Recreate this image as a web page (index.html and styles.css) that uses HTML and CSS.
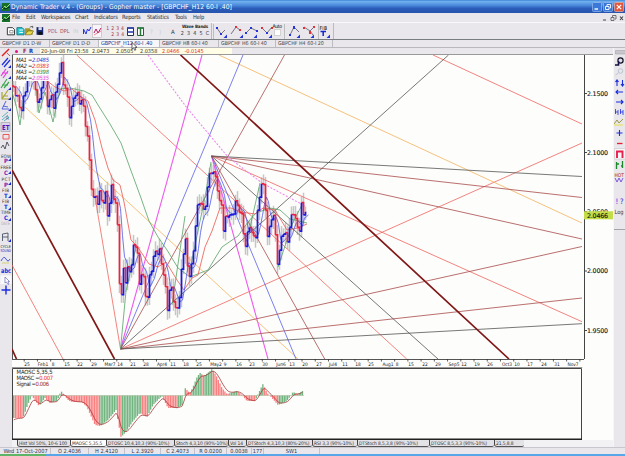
FILE: index.html
```html
<!DOCTYPE html>
<html lang="en">
<head>
<meta charset="utf-8">
<title>Dynamic Trader</title>
<link rel="stylesheet" href="styles.css">
</head>
<body>
<div class="app">
  <header class="titlebar">
    <svg class="logo" viewBox="0 0 8 8"><rect width="8" height="8" fill="#16702c"/><path d="M0 6L3 3L4 5L8 1" stroke="#9be070" fill="none"/><path d="M0 4L3 6L8 4" stroke="#032" fill="none"/></svg>
    <span class="title">Dynamic Trader v.4 - (Groups) - Gopher master - [GBPCHF_H12 60-I .40]</span>
    <svg class="winbtns" viewBox="0 0 32 10">
      <rect x=".5" y=".5" width="9" height="9" rx="1" fill="#3b78d8" stroke="#a8c8f4" stroke-width=".6"/><path d="M2.5 7H6" stroke="#fff" stroke-width="1.4"/>
      <rect x="11.5" y=".5" width="9" height="9" rx="1" fill="#3b78d8" stroke="#a8c8f4" stroke-width=".6"/><path d="M15 4V2.5H18.5V6H17.5M13.5 4.5H17V7.5H13.5Z" stroke="#fff" stroke-width=".9" fill="none"/>
      <rect x="22.5" y=".5" width="9" height="9" rx="1" fill="#e2573c" stroke="#f6c0b0" stroke-width=".6"/><path d="M24.8 2.8L29.2 7.2M29.2 2.8L24.8 7.2" stroke="#fff" stroke-width="1.2"/>
    </svg>
  </header>
  <nav class="menubar">
    <svg class="logo" viewBox="0 0 8 8"><rect width="8" height="8" fill="#16702c"/><path d="M0 6L3 3L4 5L8 1" stroke="#9be070" fill="none"/><path d="M0 4L3 6L8 4" stroke="#032" fill="none"/></svg>
    <span>File</span><span>Edit</span><span>Workspaces</span><span>Chart</span><span>Indicators</span><span>Reports</span><span>Statistics</span><span>Tools</span><span>Help</span>
    <svg class="mdi" viewBox="0 0 24 8"><path d="M2 6H5" stroke="#444"/><path d="M11.5 3V1.5H15V5H14M10 3.5H13V6.5H10Z" fill="none" stroke="#555" stroke-width=".8"/><path d="M19 2.5L22 6M22 2.5L19 6" stroke="#444" stroke-width="1.1"/></svg>
  </nav>
  <div class="toolbar">
    <div class="tb main">
      <svg class="files" viewBox="0 0 46 16">
        <path d="M3.5 4.5H9L11 6.5V12H3.5Z" fill="#fff" stroke="#333"/><path d="M6 7.5H9.5V10H6Z" fill="none" stroke="#555" stroke-width=".6"/>
        <path d="M13.5 4.5H19L21 6.5V12H13.5Z" fill="#27c7cf" stroke="#167a88"/><path d="M16 7H20M16 9.5H20" stroke="#fff"/>
        <path d="M22 5H27L28 7H30V12H22Z" fill="#a69a25"/><path d="M22 12L25 8H31L28 12Z" fill="#e9d94c" stroke="#554b10" stroke-width=".5"/><path d="M27 4L30 3L30 5" stroke="#222" stroke-width=".7" fill="none"/>
        <path d="M34 4H41V12H34Z" fill="#142570"/><path d="M36 4H39.5V7H36Z" fill="#d8dbe8"/><path d="M36 9H40V12H36Z" fill="#111"/>
      </svg>
      <span class="pdl">PDL</span><span class="dpl">DPL</span><span class="dim">IN</span>
      <svg class="waves" viewBox="0 0 20 16"><path d="M1.500 11V6L4 11L5.500 6L7 8L9 4" stroke="#2434dd" fill="none"/><rect x="10.500" y="1.500" width="9" height="13" fill="#f8f4fa" stroke="#aaa" stroke-width=".5"/><path d="M12 10L14 6L16 10L19 5" stroke="#b01c60" fill="none"/><path d="M12 12L19 8" stroke="#c45" fill="none" stroke-width=".6"/></svg>
      <div class="digits"><span>1 2 3 4</span><span>2 3 4</span></div>
      <svg class="panes" viewBox="0 0 20 16"><path d="M2.500 5H8.500V12.500H2.500Z" fill="#fff" stroke="#234"/><path d="M2 5H9M2 9H9" stroke="#2538b0" stroke-width="1.500"/><path d="M12.500 5H18.500V12.500H12.500Z" fill="#fff" stroke="#286038"/><path d="M12 5H19M15.500 5V12.500" stroke="#257a3c" stroke-width="1.500"/></svg>
      <span class="ghost">?</span><span class="ghost">)</span><span class="band-a">A</span>
      <div class="bands"><b>Wave Bands</b><span>2 3 4 5 C</span></div>
    </div>
    <div class="tb swings">
      <svg viewBox="0 0 122 16">
        <g fill="none" stroke="#556" stroke-width=".8">
          <path d="M5 5L9 11L13 7M19 11L24 4L28 7M34 10L39 5L45 8M50 5L55 10L60 4M78 12L82 4L87 9M92 4L98 8L101 12M98 8L102 4"/>
        </g>
        <path d="M62.500 6.500H68.500V12.500H62.500Z" fill="#fff" stroke="#bbb" stroke-width=".6"/>
        <g fill="#2434dd"><path d="M4 4h2v2H4zM8 10h2v2H8zM33 9h2v2h-2zM38 4h2v2h-2zM44 7h2v2h-2zM54 9h2v2h-2zM77 11h2v2h-2zM81 3h2v3h-2z"/>
        <path d="M15 11.500V15H11.500ZM31 11.500V15H27.500ZM45 11.500V15H41.500ZM60 11.500V15H56.500ZM88 11.500V15H84.500ZM102 11.500V15H98.500ZM118 11.500V15H114.500Z"/></g>
        <path d="M23 3h2v2h-2zM27 6h2v2h-2zM49 4h2v2h-2zM59 4h2v2h-2zM91 4h2v2h-2zM97 8h2v3h-2zM101 3h2v2h-2z" fill="#e0303c"/>
        <path d="M72.500 1V16M106.500 1V16M1.500 1V16" stroke="#aaa" stroke-width=".7"/>
        <text x="60.500" y="4.600" font-size="5" textLength="9.500">Auto</text>
        <text x="107.500" y="6.500" font-size="5" textLength="7.500">FIB</text>
        <path d="M108.500 8.500H114M111.200 8.500V13" stroke="#1525d0" stroke-width="1.500"/>
      </svg>
    </div>
  </div>
  <div class="tabs">
    <span>GBPCHF D1 D-W</span><span>GBPCHF D1 D-D</span><span class="on">GBPCHF_H12 60-I .40</span><span>GBPCHF H8 60-I 40</span><span>GBPCHF H6 60-I 40</span><span>GBPCHF H4 60-I 20</span>
    <svg class="cursor" viewBox="0 0 7 9"><path d="M1 .5V7L2.600 5.700L3.700 8.300L4.800 7.800L3.800 5.300H6Z" fill="#fff" stroke="#222" stroke-width=".7"/></svg>
  </div>
  <div class="work">
    <aside class="left">
      <svg viewBox="0 0 12 248">
        <g fill="none" stroke-width="1.200">
          <path d="M2 8L9 1" stroke="#e32020" stroke-width="1.500"/><path d="M7 5L10 8" stroke="#b33" stroke-width=".8"/>
          <path d="M2 17L8 10M4 19L10 12" stroke="#1a2de0"/>
          <path d="M1 28L6 21M3 30L8 23M2 25H8" stroke="#e43be0"/>
          <path d="M1 40L7 31M4 40L9 34M2 37H8" stroke="#37a84a"/>
          <path d="M2 44V51H10M2 51L8 42M3 48H8" stroke="#a8a830"/>
          <path d="M2 61L6 53M2 61H9M3 58L8 59" stroke="#4558dd" stroke-width=".9"/>
          <path d="M2 69L8 64M2 72L8 67M4 73L9 69" stroke="#53a9b5" stroke-width=".9"/>
          <path d="M1 74.500H10V83.500H1Z" stroke="#999" stroke-width=".6" fill="#dcd4ec"/>
          <path d="M3 86.500H9V91H3Z" stroke="#ea4b4b" stroke-width=".9"/>
          <path d="M1 100L3 97L5 101L7 94L9 98" stroke="#334" stroke-width=".8"/>
          <path d="M2.500 193V186L8 185V193M3 189H8" stroke="#345" stroke-width=".8"/>
          <path d="M1 213Q4 207 6 211T10 211" stroke="#3348d4" stroke-width=".9"/><path d="M2 215H9" stroke="#cc5" stroke-width=".8"/>
        </g>
        <path d="M0.500 227.500H11.500V236H0.500Z" fill="#f9f8fb"/>
        <path d="M5 229V235L6.500 234L8 236.500L9 236L8 233.500H9.500Z" fill="#fff" stroke="#55a" stroke-width=".6"/>
        <path d="M1.500 242H10.500M6 237.500V246.500" stroke="#1a2de0" stroke-width="1.400"/>
        <path d="M11 17V20H8ZM11 28V31H8ZM11 39V42H8ZM11 49V52H8ZM11 60V63H8ZM11 110V113H8ZM11 123V126H8ZM11 134V137H8ZM11 147V150H8ZM11 159V162H8ZM11 170V173H8ZM11 191V194H8Z" fill="#1525d0"/>
        <text x="2" y="82" font-size="7" font-weight="bold" fill="#4a18b0" textLength="7.500" lengthAdjust="spacingAndGlyphs">ET</text>
        <text x="6" y="72" font-size="5" fill="#379">R</text>
        <g font-size="4.600" fill="#333">
          <text x="1" y="109.500" textLength="10" lengthAdjust="spacingAndGlyphs">EOW</text><text x="0.500" y="121" textLength="11" lengthAdjust="spacingAndGlyphs">FREE</text><text x="1.500" y="133" textLength="9">PCT</text><text x="2" y="144" textLength="7">FIB</text><text x="2" y="155" textLength="7">FIB</text><text x="1" y="166.300" textLength="10" lengthAdjust="spacingAndGlyphs">TIME</text><text x="1" y="177" textLength="9" lengthAdjust="spacingAndGlyphs" fill="#aab">DATE</text>
        </g>
        <g font-size="3.900"><text x="0.500" y="199.500" textLength="10.500" lengthAdjust="spacingAndGlyphs" fill="#333">CYCLE</text><text x="0.500" y="204.300" textLength="10.500" lengthAdjust="spacingAndGlyphs" fill="#22b">SOUND</text></g>
        <g font-size="6" font-weight="bold" fill="#7a1cb0"><text x="4" y="115">P</text><text x="4" y="127">C</text><text x="4" y="138.500">P</text><g fill="#1a2de0"><text x="4" y="149.500">T</text><text x="4" y="161">T</text><text x="4" y="172">C</text></g></g>
        <text x="1" y="225" font-size="6.500" font-weight="bold" fill="#1a2de0" textLength="10" lengthAdjust="spacingAndGlyphs">abc</text>
      </svg>
    </aside>
    <main class="center">
      <div class="info"><i class="dot"></i><b class="f">F</b><b class="r">R</b>
        <div class="quote"><span>20-Jun-08 Fri 23:58</span><span>2.0473</span><span>2.0505</span><span>2.0358</span><span class="neg">2.0466</span><span class="neg">-0.0145</span></div>
      </div>
      <div class="pricerow">
        <svg class="chart" id="chart" viewBox="12 55 572 304">
          <path d="M12.500 55V359" stroke="#555" fill="none"/>
          <g id="haze" stroke="#c6c6c6" stroke-width="1.500"></g>
          <g fill="none" stroke-width=".8">
            <path stroke="#f0655f" d="M76.700 55L406.700 359M12 265L63 359M433 55L582 124M95 197L120.500 349M120.500 349L582 143M211.500 156L582 321.700"/>
            <path stroke="#f4b35e" d="M219 55L582 223M25 107L298 359"/>
            <path stroke="#ee5cee" stroke-width="1.100" d="M120.500 349L202 55M211.500 156L268 359"/>
            <path stroke="#5960ea" d="M120.500 349L243 55M211.500 156L296 359"/>
            <path stroke="#a84b4b" d="M120.500 349L284.500 55M120.500 349L582 246.500M120.500 349L582 298M211.500 156L582 197.500M211.500 156L582 239M211.500 156L324.700 359"/>
            <path stroke="#555" d="M120.500 349L448.500 55M120.500 349L582 323.700M211.500 156L582 176.500M211.500 156L438 359"/>
            <path stroke="#ed8aee" stroke-dasharray="2 1.500" stroke-width="1.100" d="M148 55L187 108L228 157L262 183L305 206"/>
            <path stroke="#801818" stroke-width="1.700" d="M180.500 55L509 359M12 170L114.500 359M12 349L16.500 359"/>
            <path stroke="#55a266" d="M12 92L16 105L20 125L24 95M36 88L39 113L45 92L53 122L60 89L70 88L84 91L92 95L98 105L110 124L121 143L130 168L141 198L149 221L158 237L167 250L178 268L190 277L208 270L217 255L222 247L238 236L248 222L256 213L270 208L280 210L290 219L307 223"/>
            <path stroke="#55a266" d="M120.500 349L126 291L136 247M172 305L185 216M190 270L205 197L211 162M249 232L260 183M278 267L293 222L302 205"/>
            <path stroke="#ec5550" d="M46 80L55 87L64 91L72 89L80 96L88 101L95 120L102 148L108 168L113 180L120 185L124 202L131 240L137 246L149 264L158 267L166 262L177 280L184 290L192 278L198 275L205 247L212 231L220 208L231 208L241 212L255 214L263 208L275 210L287 230L298 228L307 224"/>
          </g>
          <path id="fast" fill="none" stroke="#4a55e4" stroke-width=".8"/>
          <path id="down" fill="none" stroke="#f4203c" stroke-width="1.700"/>
          <path id="up" fill="none" stroke="#1919e0" stroke-width="1.700"/>
          <rect x="13" y="56" width="37" height="25" fill="#fdfdfb"/>
          <g font-size="5.800" font-style="italic" fill="#222">
            <text x="16" y="61.500" textLength="33">MA1 =<tspan fill="#2233d8">2.0485</tspan></text>
            <text x="16" y="67.800" textLength="33">MA2 =<tspan fill="#e22">2.0383</tspan></text>
            <text x="16" y="74" textLength="33">MA3 =<tspan fill="#2a8a3e">2.0398</tspan></text>
            <text x="16" y="80.200" textLength="33">MA4 =<tspan fill="#e53be5">2.0535</tspan></text>
          </g>
        </svg>
        <svg class="scale" viewBox="584 55 29 304">
          <path d="M584.500 55V359M584 93.500H587M584 152.500H587M584 211.500H587M584 271H587M584 330.500H587" stroke="#444" fill="none"/>
          <g class="ticks" fill="#111"><text x="587" y="95.700" textLength="21">2.1500</text><text x="587" y="155" textLength="21">2.1000</text><text x="587" y="213.500" textLength="21">2.0500</text><text x="587" y="273.300" textLength="21">2.0000</text><text x="587" y="332.800" textLength="21">1.9500</text></g>
          <rect x="584" y="211.300" width="29" height="8" fill="#c3dc48"/><g class="ticks"><text x="587" y="217.900" fill="#111" textLength="21">2.0466</text></g>
        </svg>
      </div>
      <svg class="dates" id="dates" viewBox="12 359 601 9"><path d="M12 359.500H584" stroke="#555"/><path d="M12 367.500H582V368" stroke="#999" fill="none"/></svg>
      <svg class="osc" id="osc" viewBox="12 368 601 72">
        <path d="M12.500 440V368.500H581.500V440" fill="none" stroke="#444"/>
        <g id="bars" stroke-width="1.350"></g>
        <path d="M13 395.500H304" stroke="#9a8" stroke-width=".4"/>
        <path id="signal" fill="none" stroke="#a83a3a" stroke-width=".8"/>
        <rect x="14" y="370" width="40" height="17" fill="#fdfdfb"/>
        <g font-size="5.800" fill="#222"><text x="16.500" y="373.800" textLength="36">MAOSC 5,35,5</text><text x="16.500" y="380" textLength="36.500">MAOSC =<tspan fill="#e22">0.007</tspan></text><text x="16.500" y="386.200" textLength="32.500">Signal =<tspan fill="#922">0.006</tspan></text></g>
        <path d="M12 439.300H582" stroke="#222" stroke-width="1.400"/>
      </svg>
      <div class="subtabs"><span>Hist Vol 50%, 10-6 100</span><span class="on">MAOSC 5,35,5</span><span>DTOSC 10,4,10,3 (90%-10%)</span><span>Stoch 4,3,10 (90%-10%)</span><span>Vol 14</span><span>DTStoch 4,3,10,3 (80%-20%)</span><span>RSI 3,3 (90%-10%)</span><span>DTStoch 8,5,3,8 (90%-10%)</span><span>DTOSC 8,5,3,3 (90%-10%)</span><span>21,5,8,8</span></div>
    </main>
    <aside class="right">
      <svg viewBox="0 0 12 182">
        <path d="M1.500 2.500H12V6H1.500Z" fill="#c9c6cf" stroke="#999" stroke-width=".5"/>
        <circle cx="6.500" cy="12.500" r="2.600" fill="#dde" stroke="#112" stroke-width="1.200"/><path d="M1 17H4.500V13" stroke="#114" stroke-width="1.600" fill="none"/>
        <circle cx="6.500" cy="23" r="2.300" fill="none" stroke="#bcc5cf"/><path d="M1.500 27L4.500 25" stroke="#bcc5cf"/>
        <g fill="none" stroke="#1a2de0" stroke-width="1.100"><path d="M3 38V32M1.500 34L3 32L4.500 34M8.500 32V38M7 36L8.500 38L10 36M9 44H2M4 42L2 44L4 46M2 54H9M7 52L9 54L7 56"/><path d="M1.500 61V66M4 62V67M6.500 61V66M9 62V67M1 64H4M6 64H9" stroke-width=".8"/><path d="M2.500 85H8.500M5.500 82V88"/></g>
        <path d="M0 76L3 72L5 75L9 71" fill="none" stroke="#9b9b42"/><path d="M0 77H9" stroke="#e8e04a"/>
        <path d="M3 95.500H8.500" stroke="#e52030" stroke-width="1.300"/>
        <path d="M.500 100.500H12V111H.500Z" fill="#faf7fa" stroke="#bbb" stroke-width=".5"/><path d="M3 110V103.500H8.500V110" fill="none" stroke="#e6204d" stroke-width="1.900"/>
        <path d="M2.500 114V121M8.500 113V120M2.500 116H5M7 118H8.500" stroke="#188a2c" stroke-width="1.300"/>
        <path d="M1 130L3 134L5 130L7 134L9 130" fill="none" stroke="#6f48e0" stroke-width=".9"/>
        <text x="0.500" y="129" font-size="5" fill="#a22" textLength="9.500" lengthAdjust="spacingAndGlyphs">HOT</text>
        <text x="1.500" y="155.500" font-size="7.500" fill="#1a2de0" textLength="8">!?</text>
        <text x="0.500" y="166" font-size="5.800" fill="#334" textLength="9" lengthAdjust="spacingAndGlyphs">Log</text>
        <path d="M0 181.500H12" stroke="#888" stroke-width=".7"/>
      </svg>
    </aside>
  </div>
  <footer class="status"><span>Wed 17-Oct-2007</span><span>O 2.4036</span><span>H 2.4120</span><span>L 2.3920</span><span>C 2.4073</span><span>R 0.0200</span><span>0.0038</span><span>177</span><span>SW1</span></footer>
  <div class="taskedge"><i></i></div>
</div>
<script src="app.js"></script>
</body>
</html>
```
FILE: styles.css
```css
* { box-sizing: border-box; }
body { margin: 0; background: #e9e7ec; font-family: "DejaVu Sans Condensed", "DejaVu Sans", sans-serif; color: #333; overflow: hidden; }
svg { display: block; flex: none; }
svg text { font-family: "DejaVu Sans Condensed", "DejaVu Sans", sans-serif; }
.app { width: 625px; height: 456px; display: flex; flex-direction: column; white-space: nowrap; }
.titlebar { height: 13px; flex: none; display: flex; align-items: center; background: linear-gradient(#3d84d6 0, #72b0ee 12%, #4b8bdc 40%, #2a5cb8 65%, #2754ae 100%); padding: 0 1px 0 2px; }
.logo { width: 8px; height: 8px; }
.title { margin-left: 1px; font-size: 6.7px; line-height: 10px; color: #fff; letter-spacing: 0.06px; width: 222px; }
.winbtns { width: 32px; height: 10px; margin-left: auto; }
.menubar { height: 10px; flex: none; display: grid; grid-template-columns: 10px 14px 15px 34px 19px 28px 25px 28px 18px 14px 1fr; align-items: center; padding-left: 2px; font-size: 5.8px; line-height: 9px; letter-spacing: -0.2px; border-bottom: 1px solid #f8f8fa; }
.mdi { width: 24px; height: 8px; justify-self: end; }
.toolbar { height: 17px; flex: none; display: flex; border-bottom: 1px solid #777d80; padding-left: 4px; }
.tb { height: 16px; display: flex; align-items: center; border-right: 1px solid #bbb; }
.main { width: 208px; font-size: 5.4px; }
.files { width: 44px; height: 16px; }
.pdl, .dpl { width: 12px; color: #a05058; }
.pdl { color: #b06068; }
.dim { width: 10px; color: #cfced6; padding-left: 1px; }
.waves { width: 20px; height: 16px; }
.digits { width: 22px; display: flex; flex-direction: column; align-items: flex-end; font-size: 5px; line-height: 6.5px; color: #a63440; word-spacing: 0.7px; }
.panes { width: 20px; height: 16px; margin-left: 1px; }
.ghost { width: 9px; padding-left: 5px; color: #c6c8d0; font-size: 6px; }
.band-a { width: 16px; padding-left: 8px; font-size: 6px; }
.bands { flex: 1; display: flex; flex-direction: column; align-items: center; font-size: 5.4px; line-height: 7.5px; }
.bands b { font-size: 4.4px; line-height: 6px; color: #222; letter-spacing: -0.1px; }
.bands span { word-spacing: 1.6px; }
.swings { width: 122px; }
.swings svg { width: 122px; height: 16px; }
.tabs { position: relative; height: 8px; flex: none; display: grid; grid-template-columns: 50px 49px 61px 59px 57px 57px 1fr; font-size: 5.3px; line-height: 7px; border-bottom: 1px solid #b9b9bd; color: #444; }
.tabs span { padding-left: 2px; border-right: 1px solid #bcbcc2; }
.tabs .on { background: #f7f7fa; color: #223089; font-size: 5.5px; letter-spacing: -0.1px; }
.cursor { position: absolute; left: 131px; top: 2px; width: 7px; height: 9px; }
.work { height: 399px; flex: none; display: flex; }
.left { width: 12px; }
.left svg { width: 12px; height: 248px; }
.center { width: 601px; display: flex; flex-direction: column; }
.info { height: 7px; flex: none; display: flex; align-items: center; font-size: 5.8px; line-height: 7px; }
.dot { width: 3px; height: 3px; border-radius: 50%; background: #e3157f; margin: 0 5px 0 3px; }
.f { width: 6px; color: #a01824; }
.r { width: 11px; color: #2030b0; }
.quote { width: 192px; height: 7px; display: grid; grid-template-columns: 51px 24px 24px 22px 22.5px 1fr; padding-left: 1px; background: #fffde6; line-height: 7px; color: #333; font-size: 5.5px; }
.quote .neg { color: #e22a2a; }
.pricerow { display: flex; height: 304px; flex: none; background: #fdfdfb; }
.chart { width: 572px; height: 304px; border-top: 1px solid #999; }
.scale { width: 29px; height: 304px; border-top: 1px solid #999; }
.chart, .scale { box-sizing: content-box; margin-top: -1px; }
.ticks text { font-family: "DejaVu Sans", sans-serif; font-size: 6.3px; stroke: #111; stroke-width: 0.12px; }
.dates { width: 601px; height: 9px; background: #fdfdfb; }
.osc { width: 601px; height: 72px; background: #fdfdfb; }
.subtabs { height: 7px; flex: none; display: grid; grid-template-columns: 53px 36px 68px 54px 18px 66px 45px 72px 65px 30px 1fr; padding-left: 5px; font-size: 4.9px; line-height: 7px; background: #f2f1f4; color: #333; }
.subtabs span { background: #e3e2e6; border-bottom: 1px solid #555; border-left: 1px solid #444; border-radius: 0 0 2px 3px; padding-left: 1px; overflow: hidden; letter-spacing: -0.1px; }
.subtabs .on { background: #fff; }
.right { width: 12px; border-left: 1px solid #f6f6f8; }
.right svg { width: 12px; height: 182px; }
.status { height: 7px; flex: none; display: grid; grid-template-columns: 50px 38px 36px 36px 34px 32px 25px 12px 56px 1fr; padding-left: 1px; font-size: 5.6px; line-height: 6px; border-top: 1px solid #c9c7cd; text-align: center; color: #334; }
.status span { border-right: 1px solid #c5c3c9; }
.taskedge { height: 2px; flex: none; background: #58a5e8; }
.taskedge i { display: block; width: 46px; height: 2px; background: #5fb566; }
```
FILE: app.js
```js
const NS = "http://www.w3.org/2000/svg";
const el = (id) => document.getElementById(id);

// Swing points of the price series: x, y pairs in chart units.
const price = [
  [13,86],[16,92],[19,104],[22,113],[23,104],[26,84],[29,70],[32,78],[36,92],[39,105],[42,80],[45,76],[48,108],[51,92],[54,107],[57,88],[61,60],[63,78],[66,92],[70,118],[73,98],[76,90],[79,105],[82,98],[84,112],
  [87,130],[89,158],[91,182],[93,203],[95,192],[97,201],[100,194],[103,206],[106,192],[108,216],[112,183],[114,202],[117,213],[119,252],[120,307],[122,295],[124,257],[126,294],[128,262],[131,270],[134,241],[137,250],[139,285],[142,268],
  [147,305],[150,273],[155,250],[160,255],[164,275],[168,311],[170,287],[173,295],[176,312],[179,300],[183,260],[185,230],[188,275],[193,263],[195,227],[198,203],[201,198],[204,218],[208,183],[211,166],[214,176],[217,183],[219,208],
  [221,192],[223,230],[227,215],[231,218],[235,202],[239,210],[242,220],[246,247],[249,223],[252,238],[255,237],[258,207],[262,180],[265,200],[268,241],[271,216],[274,220],[278,265],[282,230],[287,242],[290,223],[293,208],[296,226],[299,233],[302,199],[304,216],[307,206]
];
// Swing points of the oscillator.
const maosc = [
  [13,418],[23,418],[28,404],[32,396],[39,406],[45,398],[50,403],[57,401],[61,391],[68,400],[72,402],[82,402],[87,407],[95,425],[100,426],[108,420],[116,410],[121,437],[126,432],[133,421],[140,413],[147,417],[153,405],[162,396],
  [168,408],[177,408],[182,405],[185,388],[190,393],[193,387],[197,377],[200,373],[204,376],[210,371],[212,369],[216,375],[222,388],[227,394],[237,391],[242,395],[247,401],[255,401],[260,390],[263,384],[267,393],[272,398],[278,405],[287,401],[293,392],[298,394],[304,390]
];

function sample(points, x) {
  for (let i = 1; i < points.length; i++) {
    const a = points[i - 1], b = points[i];
    if (x <= b[0]) return a[1] + (b[1] - a[1]) * (x - a[0]) / (b[0] - a[0]);
  }
  return points[points.length - 1][1];
}
function add(parent, tag, attrs, text) {
  const node = document.createElementNS(NS, tag);
  for (const key in attrs) node.setAttribute(key, attrs[key]);
  if (text) node.textContent = text;
  parent.appendChild(node);
}

let up = "", down = "", fast = "M", slow = price[0][1], prev = slow;
let n = 0;
for (let x = 13.5; x <= 306; x += 2, n++) {
  const wobble = Math.sin(n * 2.3) * 4 + Math.sin(n * 1.1) * 2;
  const y = sample(price, x) + wobble;
  const reach = 5 + Math.abs(Math.sin(n * 1.7)) * 5;
  add(el("haze"), "path", { d: `M${x} ${Math.min(y, prev) - reach}V${Math.max(y, prev) + reach}` });
  const seg = `M${x - 2} ${prev}H${x}V${y}`;
  if (y < prev) up += seg; else down += seg;
  slow += (y - slow) * 0.36;
  fast += `${x + 3} ${slow} `;
  prev = y;
}
el("up").setAttribute("d", up);
el("down").setAttribute("d", down);
el("fast").setAttribute("d", fast);

let signal = "M", avg = 421, last = 421;
for (let x = 13.7; x <= 304; x += 1.65) {
  const y = sample(maosc, x);
  add(el("bars"), "path", { d: `M${x} 395.5V${y}`, stroke: y <= last - 0.05 ? "#72b580" : "#fa7f80" });
  avg += (y - avg) * 0.38;
  signal += `${x} ${avg} `;
  last = y;
}
el("signal").setAttribute("d", signal);

const dates = [[27,"25"],[43,"Feb1"],[53,"8"],[67,"15"],[80,"22"],[94,"29"],[110,"Mar7"],[120,"14"],[133,"21"],[146,"28"],[162,"Apr4"],[173,"11"],[186,"18"],[199,"25"],[216,"May2"],[225,"9"],[239,"16"],[252,"23"],[265,"30"],[281,"Jun6"],[292,"13"],[305,"20"],[319,"27"],[333,"Jul4"],[345,"11"],[358,"18"],[371,"25"],[388,"Aug1"],[397,"8"],[411,"15"],[425,"22"],[438,"29"],[454,"Sep5"],[464,"12"],[477,"19"],[490,"26"],[507,"Oct3"],[517,"10"],[530,"17"],[544,"24"],[557,"31"],[573,"Nov7"]];
for (const [x, label] of dates) {
  add(el("dates"), "text", { x, y: 365.6, "font-size": 4.8, "text-anchor": "middle", fill: "#222" }, label);
}
for (let k = 0; k < 43; k++) {
  add(el("dates"), "path", { d: `M${24.2 + 13.23 * k} 359V361.5`, stroke: "#333", "stroke-width": 0.8 });
}
```
